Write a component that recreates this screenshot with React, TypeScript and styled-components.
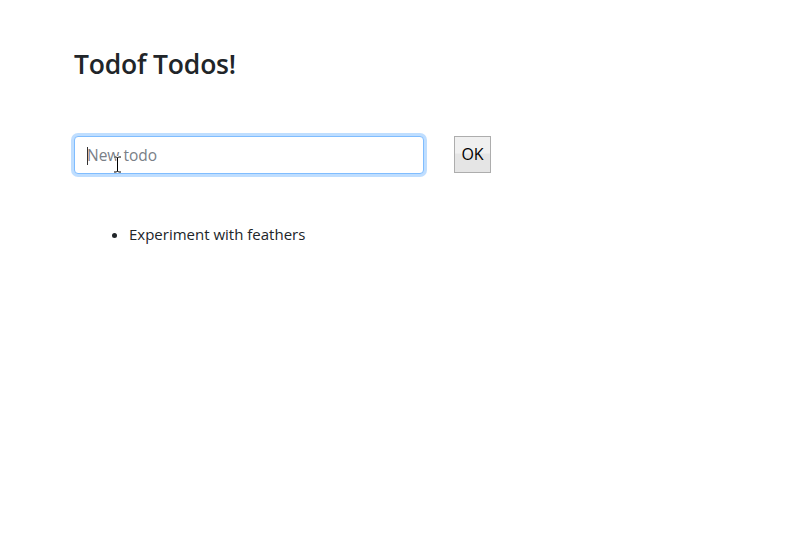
import React, { useState } from "react";
import styled, { createGlobalStyle } from "styled-components";

const GlobalStyle = createGlobalStyle`
    html, body {
        margin: 0;
        padding: 0;
        background: #fff;
    }
    body {
        font-family: "Open Sans", "Noto Sans", "Liberation Sans", sans-serif;
        color: #212529;
    }
`

const Page = styled.div`
    display: flex;
    flex-direction: column;
    padding: 49px 0 0 74px;
    min-height: 547px;
    box-sizing: border-box;
`

const Title = styled.h3`
    margin: 0;
    font-size: 26.5px;
    font-weight: 600;
    line-height: 1.2;
    letter-spacing: -0.2px;
`

const Form = styled.form`
    display: flex;
    align-items: flex-start;
    gap: 30px;
    margin-top: 55px;
`

const InputWrap = styled.div`
    position: relative;
`

const TodoInput = styled.input`
    box-sizing: border-box;
    width: 350px;
    height: 38px;
    padding: 6px 12px;
    font-family: inherit;
    font-size: 15.5px;
    color: #495057;
    background: #fff;
    border: 1px solid #80bdff;
    border-radius: 4px;
    outline: none;
    box-shadow: 0 0 0 3px rgba(0, 123, 255, 0.25);

    &::placeholder {
        color: #7a8087;
    }
`

// the mouse pointer hovering over the field in the screenshot
const Pointer = styled.svg`
    position: absolute;
    left: 39px;
    top: 20px;
    pointer-events: none;
`

const Caret = styled.span`
    position: absolute;
    left: 13px;
    top: 11px;
    width: 1px;
    height: 18px;
    background: #333;
    pointer-events: none;
`

const OkButton = styled.button`
    box-sizing: border-box;
    width: 37px;
    height: 37px;
    padding: 0;
    font-family: "Open Sans", "Noto Sans", sans-serif;
    font-size: 16px;
    color: #000;
    border: 1px solid #adadad;
    border-radius: 0;
    background: linear-gradient(#f0f0f0 0%, #f0f0f0 45%, #e5e5e5 50%, #e5e5e5 100%);
    cursor: pointer;
`

const List = styled.ul`
    margin: 48px 0 0 0;
    padding-left: 55px;
    font-size: 15px;
    line-height: 24px;
`

const Item = styled.li`
    padding-left: 0;
`

export default function App() {
    const [todos, setTodos] = useState<string[]>(["Experiment with feathers"])
    const [text, setText] = useState("")

    const add = (e: React.FormEvent) => {
        e.preventDefault()
        if (!text.trim()) return
        setTodos([...todos, text.trim()])
        setText("")
    }

    return (
        <>
            <GlobalStyle />
            <Page>
                <Title>Todof Todos!</Title>
                <Form onSubmit={add}>
                    <InputWrap>
                        <TodoInput
                            placeholder="New todo"
                            value={text}
                            onChange={e => setText(e.target.value)}
                        />
                        <Caret />
                        <Pointer width="9" height="17" viewBox="0 0 9 17">
                            <path d="M1 1h2.5l1 1 1-1H8M4.5 2v13M1 16h2.5l1-1 1 1H8" fill="none" stroke="#fff" strokeWidth="2.4" />
                            <path d="M1 1h2.5l1 1 1-1H8M4.5 2v13M1 16h2.5l1-1 1 1H8" fill="none" stroke="#000" strokeWidth="1" />
                        </Pointer>
                    </InputWrap>
                    <OkButton type="submit">OK</OkButton>
                </Form>
                <List>
                    {todos.map((t, i) => <Item key={i}>{t}</Item>)}
                </List>
            </Page>
        </>
    )
}
